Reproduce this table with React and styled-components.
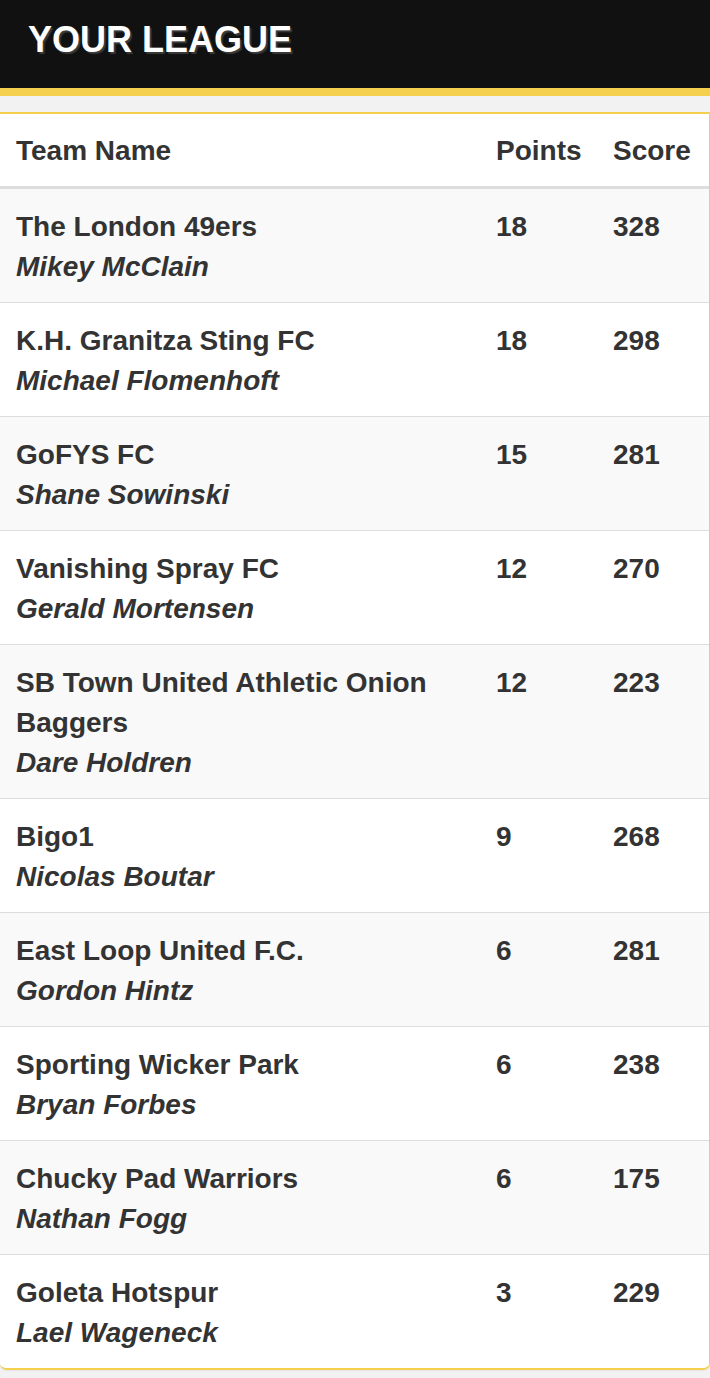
import React from 'react';
import styled, {createGlobalStyle} from "styled-components";

const GlobalStyle = createGlobalStyle`
  html, body {
    margin: 0;
    padding: 0;
    background: #f2f2f2;
  }
  body {
    font-family: "Liberation Sans", Arial, Helvetica, sans-serif;
    color: #333;
  }
`;

const Page = styled.div`
  width: 710px;
  background: #f2f2f2;
  padding-bottom: 10px;
`;

const Header = styled.header`
  background: #111;
  height: 88px;
  border-bottom: 8px solid #f5d04e;
  display: flex;
  align-items: center;
  padding: 0 28px;
  box-sizing: content-box;
`;

const Title = styled.h1`
  margin: 0;
  margin-top: -8px;
  font-size: 36px;
  font-weight: 700;
  color: #fff;
  text-shadow: 2px 2px 1px #3a3a3a;
`;

const Card = styled.div`
  margin-top: 16px;
  background: #fff;
  border: 1px solid #f5d04e;
  border-width: 2px 1px 2px 0;
  border-radius: 0 0 7px 7px;
  overflow: hidden;
  box-shadow: 0 1px 2px rgba(0, 0, 0, 0.06);
`;

const Table = styled.table`
  width: 100%;
  border-collapse: collapse;
  table-layout: fixed;
  font-size: 28px;
  font-weight: 700;
  line-height: 40px;
`;

const Th = styled.th`
  text-align: left;
  padding: 17px 16px 15px;
  width: ${p => p.$w || 'auto'};
  border-bottom: 3px solid #ddd;
`;

const Row = styled.tr`
  background: ${p => p.$striped ? '#f9f9f9' : '#fff'};
  border-top: ${p => p.$first ? 'none' : '1px solid #ddd'};
`;

const Td = styled.td`
  padding: 18px 16px 15px;
  vertical-align: top;
`;

const Manager = styled.div`
  font-style: italic;
`;

const teams = [
  {team: 'The London 49ers', manager: 'Mikey McClain', points: 18, score: 328},
  {team: 'K.H. Granitza Sting FC', manager: 'Michael Flomenhoft', points: 18, score: 298},
  {team: 'GoFYS FC', manager: 'Shane Sowinski', points: 15, score: 281},
  {team: 'Vanishing Spray FC', manager: 'Gerald Mortensen', points: 12, score: 270},
  {team: 'SB Town United Athletic Onion Baggers', manager: 'Dare Holdren', points: 12, score: 223},
  {team: 'Bigo1', manager: 'Nicolas Boutar', points: 9, score: 268},
  {team: 'East Loop United F.C.', manager: 'Gordon Hintz', points: 6, score: 281},
  {team: 'Sporting Wicker Park', manager: 'Bryan Forbes', points: 6, score: 238},
  {team: 'Chucky Pad Warriors', manager: 'Nathan Fogg', points: 6, score: 175},
  {team: 'Goleta Hotspur', manager: 'Lael Wageneck', points: 3, score: 229},
];

export default function App() {
  return (
    <Page>
      <GlobalStyle />
      <Header>
        <Title>YOUR LEAGUE</Title>
      </Header>
      <Card>
        <Table>
          <thead>
            <tr>
              <Th>Team Name</Th>
              <Th $w="85px">Points</Th>
              <Th $w="80px">Score</Th>
            </tr>
          </thead>
          <tbody>
            {teams.map((t, i) => (
              <Row key={t.team} $striped={i % 2 === 0} $first={i === 0}>
                <Td>
                  <div>{t.team}</div>
                  <Manager>{t.manager}</Manager>
                </Td>
                <Td>{t.points}</Td>
                <Td>{t.score}</Td>
              </Row>
            ))}
          </tbody>
        </Table>
      </Card>
    </Page>
  );
}
